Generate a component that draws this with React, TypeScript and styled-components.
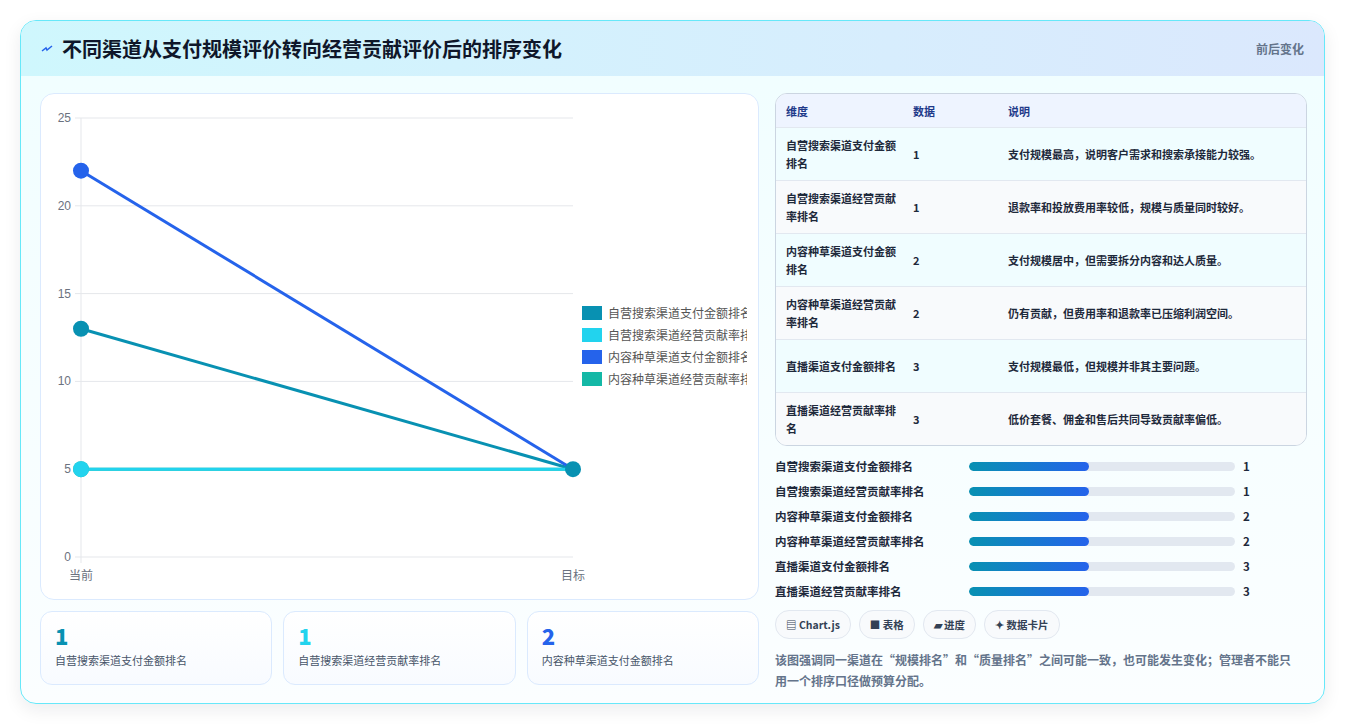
import React from "react";
import styled, { createGlobalStyle } from "styled-components";

const Global = createGlobalStyle`
  body { margin: 0; background: #fff; font-family: "Noto Sans CJK SC", "Noto Sans", sans-serif; }
`

const Page = styled.div`
  padding: 20px 20px 20px 20px;
  height: 724px;
  box-sizing: border-box;
`
const Card = styled.div`
  border: 1px solid #67e8f9;
  border-radius: 16px;
  overflow: hidden;
  background: linear-gradient(180deg, #f0feff 0%, #fbfeff 100%);
  box-shadow: 0 6px 18px rgba(15, 23, 42, 0.08);
  height: 684px;
  box-sizing: border-box;
`
const Header = styled.div`
  height: 55px;
  display: flex;
  align-items: center;
  justify-content: space-between;
  padding: 0 20px;
  background: linear-gradient(90deg, #cff7fd 0%, #dbe8fd 100%);
`
const Title = styled.h1`
  margin: 0;
  font-size: 20px;
  font-weight: 700;
  color: #0f172a;
  display: flex;
  align-items: center;
  gap: 9px;
`
const Tag = styled.span`
  font-size: 12px;
  font-weight: 700;
  color: #64748b;
`
const Body = styled.div`
  display: grid;
  grid-template-columns: 719px 532px;
  gap: 16px;
  padding: 17px 19px 0 19px;
`
const Col = styled.div`
  display: flex;
  flex-direction: column;
`
const ChartBox = styled.div`
  height: 507px;
  border: 1px solid #dbeafe;
  border-radius: 14px;
  background: #fff;
  box-sizing: border-box;
`
const Stats = styled.div`
  display: grid;
  grid-template-columns: repeat(3, 1fr);
  gap: 11px;
  margin-top: 11px;
`
const Stat = styled.div`
  height: 74px;
  box-sizing: border-box;
  border: 1px solid #dbeafe;
  border-radius: 12px;
  background: linear-gradient(180deg, #fff, #f8fbff);
  padding: 8px 14px;
`
const StatNum = styled.div<{ $c: string }>`
  font-size: 22px;
  font-weight: 800;
  color: ${p => p.$c};
  line-height: 30px;
`
const StatLabel = styled.div`
  font-size: 11px;
  color: #475569;
  margin-top: 2px;
`
const Table = styled.div`
  border: 1px solid #cbd5e1;
  border-radius: 12px;
  overflow: hidden;
  background: #fff;
`
const Row = styled.div<{ $bg: string; $h: number }>`
  display: grid;
  grid-template-columns: 127px 95px 1fr;
  height: ${p => p.$h}px;
  box-sizing: border-box;
  align-items: center;
  padding-left: 10px;
  background: ${p => p.$bg};
  border-top: 1px solid #e2e8f0;
  &:first-child { border-top: none; }
  font-size: 11px;
  font-weight: 700;
  color: #1e293b;
  line-height: 18px;
`
const HeadRow = styled(Row)`
  color: #1e3a8a;
`
const Cell = styled.div`
  padding-right: 16px;
`
const Bars = styled.div`
  display: flex;
  flex-direction: column;
  gap: 7px;
  margin-top: 11px;
`
const BarRow = styled.div`
  display: grid;
  grid-template-columns: 194px 266px 1fr;
  align-items: center;
  height: 18px;
  font-size: 11.5px;
  font-weight: 700;
  color: #1e293b;
`
const Track = styled.div`
  height: 9px;
  border-radius: 5px;
  background: #e2e8f0;
  overflow: hidden;
`
const Fill = styled.div`
  height: 100%;
  border-radius: 5px;
  background: linear-gradient(90deg, #0891b2, #2563eb);
`
const Val = styled.span`
  padding-left: 8px;
`
const Chips = styled.div`
  display: flex;
  gap: 8px;
  margin-top: 10px;
`
const Chip = styled.span`
  font-size: 10.5px;
  font-weight: 700;
  color: #334155;
  border: 1px solid #e2e8f0;
  border-radius: 14px;
  background: #f8fafc;
  padding: 0 10px;
  height: 27px;
  display: flex;
  align-items: center;
`
const Note = styled.p`
  margin: 10px 0 0;
  padding-right: 12px;
  font-size: 12px;
  line-height: 21px;
  color: #64748b;
  font-weight: 600;
`

const table = [
  ["自营搜索渠道支付金额排名", "1", "支付规模最高，说明客户需求和搜索承接能力较强。"],
  ["自营搜索渠道经营贡献率排名", "1", "退款率和投放费用率较低，规模与质量同时较好。"],
  ["内容种草渠道支付金额排名", "2", "支付规模居中，但需要拆分内容和达人质量。"],
  ["内容种草渠道经营贡献率排名", "2", "仍有贡献，但费用率和退款率已压缩利润空间。"],
  ["直播渠道支付金额排名", "3", "支付规模最低，但规模并非其主要问题。"],
  ["直播渠道经营贡献率排名", "3", "低价套餐、佣金和售后共同导致贡献率偏低。"],
]

const series = [
  { name: "自营搜索渠道支付金额排名", c: "#0891b2", a: 13, b: 5 },
  { name: "自营搜索渠道经营贡献率排名", c: "#22d3ee", a: 5, b: 5 },
  { name: "内容种草渠道支付金额排名", c: "#2563eb", a: 22, b: 5 },
  { name: "内容种草渠道经营贡献率排名", c: "#14b8a6", a: 5, b: 5 },
]

const Chart = () => {
  const x0 = 40, x1 = 532, yTop = 24, yBot = 463
  const y = (v: number) => yBot - (v / 25) * (yBot - yTop)
  return (
    <svg width="717" height="505" style={{ display: "block" }} fontFamily="Liberation Sans, Noto Sans CJK SC, sans-serif">
      {[0, 5, 10, 15, 20, 25].map(v => (
        <g key={v}>
          <line x1={x0 - 6} x2={x1} y1={y(v)} y2={y(v)} stroke="#e5e7eb" />
          <text x={x0 - 10} y={y(v) + 4} fontSize="12" fill="#6b7280" textAnchor="end">{v}</text>
        </g>
      ))}
      <line x1={x0} x2={x0} y1={yTop} y2={yBot + 6} stroke="#e5e7eb" />
      <text x={x0} y={yBot + 23} fontSize="12" fill="#6b7280" textAnchor="middle">当前</text>
      <text x={x1} y={yBot + 23} fontSize="12" fill="#6b7280" textAnchor="middle">目标</text>
      {[series[3], series[0], series[2], series[1]].map(s => (
        <line key={s.name} x1={x0} y1={y(s.a)} x2={x1} y2={y(s.b)} stroke={s.c} strokeWidth="3" />
      ))}
      {[series[3], series[0], series[2], series[1]].map(s => (
        <circle key={s.name + "p"} cx={x0} cy={y(s.a)} r="8" fill={s.c} />
      ))}
      <circle cx={x1} cy={y(5)} r="8" fill="#0891b2" />
      <svg x="540" y="210" width="166" height="90">
        {series.map((s, i) => (
          <g key={s.name + "l"}>
            <rect x="1" y={2 + i * 22} width="20" height="14" fill={s.c} />
            <text x="27" y={14 + i * 22} fontSize="12" fill="#555">{s.name}</text>
          </g>
        ))}
      </svg>
    </svg>
  )
}

export default function App() {
  return (
    <Page>
      <Global />
      <Card>
        <Header>
          <Title>
            <svg width="12" height="12" viewBox="0 0 12 12"><path d="M1 8 L5 5 L6 7 L11 3" stroke="#2563eb" strokeWidth="1.5" fill="none" /></svg>
            不同渠道从支付规模评价转向经营贡献评价后的排序变化
          </Title>
          <Tag>前后变化</Tag>
        </Header>
        <Body>
          <Col>
            <ChartBox><Chart /></ChartBox>
            <Stats>
              <Stat><StatNum $c="#0891b2">1</StatNum><StatLabel>自营搜索渠道支付金额排名</StatLabel></Stat>
              <Stat><StatNum $c="#22d3ee">1</StatNum><StatLabel>自营搜索渠道经营贡献率排名</StatLabel></Stat>
              <Stat><StatNum $c="#2563eb">2</StatNum><StatLabel>内容种草渠道支付金额排名</StatLabel></Stat>
            </Stats>
          </Col>
          <Col>
            <Table>
              <HeadRow $bg="#eef4ff" $h={33}><Cell>维度</Cell><Cell>数据</Cell><Cell>说明</Cell></HeadRow>
              {table.map((r, i) => (
                <Row key={r[0]} $bg={i % 2 ? "#f8fafc" : "#f0fdff"} $h={53}>
                  <Cell>{r[0]}</Cell><Cell>{r[1]}</Cell><Cell>{r[2]}</Cell>
                </Row>
              ))}
            </Table>
            <Bars>
              {table.map(r => (
                <BarRow key={r[0] + "b"}>
                  <span>{r[0]}</span>
                  <Track><Fill style={{ width: "45%" }} /></Track>
                  <Val>{r[1]}</Val>
                </BarRow>
              ))}
            </Bars>
            <Chips>
              <Chip>▤ Chart.js</Chip>
              <Chip>■ 表格</Chip>
              <Chip>▰ 进度</Chip>
              <Chip>✦ 数据卡片</Chip>
            </Chips>
            <Note>该图强调同一渠道在“规模排名”和“质量排名”之间可能一致，也可能发生变化；管理者不能只用一个排序口径做预算分配。</Note>
          </Col>
        </Body>
      </Card>
    </Page>
  )
}
